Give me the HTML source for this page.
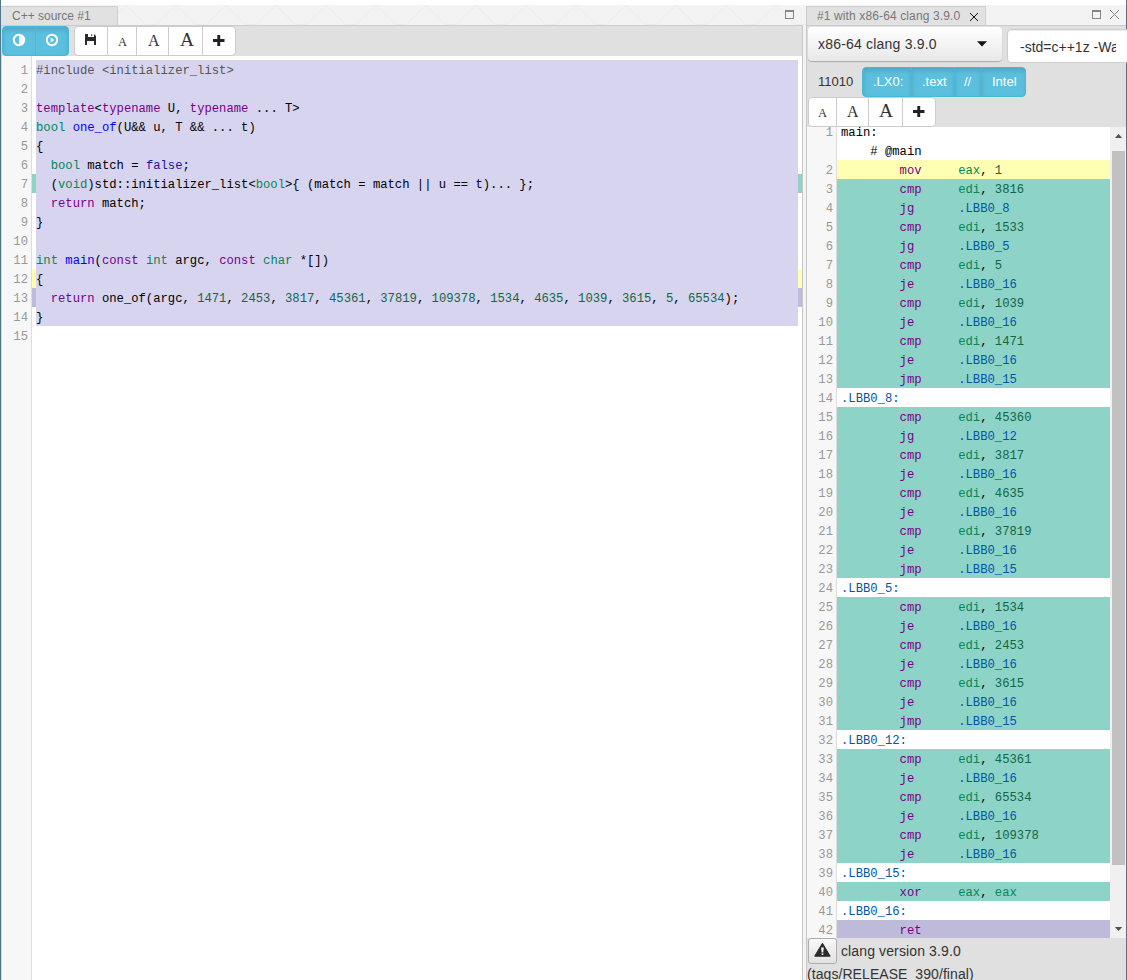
<!DOCTYPE html>
<html><head><meta charset="utf-8">
<style>
*{box-sizing:border-box;margin:0;padding:0}
html,body{width:1127px;height:980px;overflow:hidden;background:#fff;font-family:"Liberation Sans",sans-serif;position:relative}
.a{position:absolute}
.edge{top:0;width:1px;height:980px;background:#507886}
.hdr{top:5px;height:21px;background:#f3f3f3;border-bottom:1px solid #cccccc}
.tab{top:6px;height:19px;background:#e1e1e1;border-top:1px solid #cfcfcf;border-right:1px solid #cfcfcf;color:#777;font-size:12px;line-height:18px;white-space:nowrap}
.tb{background:#e0e0e0}
.btn{background:#fff;border:1px solid #ccc;height:29px}
.mono{font-family:"Liberation Mono",monospace;font-size:12.21px;line-height:19px;white-space:pre;color:#000}
.gut{background:#f7f7f7;border-right:1px solid #ddd}
.serif{font-family:"Liberation Serif",serif;color:#333;line-height:1}
.wt{color:#fff;font-size:13px;line-height:16px;white-space:nowrap}
.bb{top:-1px;height:30px;border:1px solid #46b8da;box-shadow:inset 0 3px 5px rgba(0,0,0,.125)}
.ln{color:#999;text-align:right}
.k{color:#708}.t{color:#085}.d{color:#00f}.at{color:#219}.n{color:#164}.m{color:#555}.v2{color:#05a}
</style></head><body>
<!-- outer edges -->
<div class="a edge" style="left:0"></div>
<div class="a edge" style="left:1126px"></div>

<!-- LEFT PANE -->
<div class="a hdr" style="left:1px;width:805px"></div>
<svg class="a" style="left:1px;top:5px" width="1125" height="20" viewBox="1 0 1125 20"><polyline points="-24.1,0 -4.6,19.5 6.4,19.5 25.9,0 45.4,19.5 56.4,19.5 75.9,0 95.4,19.5 106.4,19.5 125.9,0 145.4,19.5 156.4,19.5 175.9,0 195.4,19.5 206.4,19.5 225.9,0 245.4,19.5 256.4,19.5 275.9,0 295.4,19.5 306.4,19.5 325.9,0 345.4,19.5 356.4,19.5 375.9,0 395.4,19.5 406.4,19.5 425.9,0 445.4,19.5 456.4,19.5 475.9,0 495.4,19.5 506.4,19.5 525.9,0 545.4,19.5 556.4,19.5 575.9,0 595.4,19.5 606.4,19.5 625.9,0 645.4,19.5 656.4,19.5 675.9,0 695.4,19.5 706.4,19.5 725.9,0 745.4,19.5 756.4,19.5 775.9,0 795.4,19.5 806.4,19.5 825.9,0 845.4,19.5 856.4,19.5 875.9,0 895.4,19.5 906.4,19.5 925.9,0 945.4,19.5 956.4,19.5 975.9,0 995.4,19.5 1006.4,19.5 1025.9,0 1045.4,19.5 1056.4,19.5 1075.9,0 1095.4,19.5 1106.4,19.5 1125.9,0 1145.4,19.5 1156.4,19.5 1175.9,0 1195.4,19.5 1206.4,19.5" fill="none" stroke="#ececec" stroke-width="1"/></svg>
<div class="a tab" style="left:1px;width:117px;padding-left:11px">C++ source #1</div>
<div class="a tb" style="left:1px;top:26px;width:801px;height:30px"></div>
<!-- blue group -->
<div class="a" style="left:2px;top:26px;width:67px;height:30px;background:#5bc0de;border:1px solid #46b8da;border-radius:4px;box-shadow:inset 0 3px 5px rgba(0,0,0,.125)"></div>
<div class="a" style="left:35px;top:26px;width:1px;height:30px;background:#4fb6d6"></div>
<svg class="a" style="left:12px;top:33px" width="14" height="14" viewBox="0 0 14 14"><circle cx="7" cy="7" r="5.2" fill="none" stroke="#fff" stroke-width="2"/><path d="M7 1.8 A5.2 5.2 0 0 1 7 12.2 Z" fill="#fff"/></svg>
<svg class="a" style="left:45px;top:33px" width="14" height="14" viewBox="0 0 14 14"><circle cx="7" cy="7" r="5.2" fill="none" stroke="#fff" stroke-width="2"/><path d="M5.7 4.6 L9.4 7 L5.7 9.4 Z" fill="#fff"/></svg>
<!-- white group -->
<div class="a" style="left:74px;top:26px;width:162px;height:30px;background:#fff;border:1px solid #ccc;border-radius:4px"></div>
<div class="a" style="left:107px;top:26px;width:1px;height:30px;background:#ccc"></div>
<div class="a" style="left:136px;top:26px;width:1px;height:30px;background:#ccc"></div>
<div class="a" style="left:168px;top:26px;width:1px;height:30px;background:#ccc"></div>
<div class="a" style="left:202px;top:26px;width:1px;height:30px;background:#ccc"></div>
<svg class="a" style="left:84px;top:33px" width="13" height="13" viewBox="0 0 13 13"><path d="M1 1 H4 V4 H10 V1 L12 3 V12 H10 V8 H3 V12 H1 Z" fill="#2a2a2a"/><rect x="7.2" y="1" width="1" height="2.2" fill="#555"/></svg>
<div class="a serif" style="left:118px;top:36px;font-size:12.5px">A</div>
<div class="a serif" style="left:148px;top:33px;font-size:16px">A</div>
<div class="a serif" style="left:180px;top:30px;font-size:19.5px">A</div>
<svg class="a" style="left:213px;top:35px" width="12" height="11" viewBox="0 0 12 11"><path d="M4.3 0 H7.2 V4.1 H11.5 V6.9 H7.2 V11 H4.3 V6.9 H0 V4.1 H4.3 Z" fill="#222"/></svg>

<!-- left editor -->
<div class="a" style="left:1px;top:25px;width:1px;height:955px;background:#d6d6d6;z-index:3"></div>
<div class="a gut" style="left:1px;top:56px;width:31px;height:924px"></div>
<div class="a" style="left:32px;top:174px;width:770px;height:19px;background:#8dd3c7"></div>
<div class="a" style="left:32px;top:269px;width:770px;height:19px;background:#ffffb3"></div>
<div class="a" style="left:32px;top:288px;width:770px;height:19px;background:#bebada"></div>
<div class="a" style="left:36px;top:60px;width:762px;height:266px;background:#d7d4f0"></div>
<div class="a mono ln" style="left:1px;top:62px;width:27px">1</div>
<div class="a mono" style="left:36px;top:62px"><span class="m">#include &lt;initializer_list&gt;</span></div>
<div class="a mono ln" style="left:1px;top:81px;width:27px">2</div>
<div class="a mono ln" style="left:1px;top:100px;width:27px">3</div>
<div class="a mono" style="left:36px;top:100px"><span class="k">template</span>&lt;<span class="k">typename</span> U, <span class="k">typename</span> ... T&gt;</div>
<div class="a mono ln" style="left:1px;top:119px;width:27px">4</div>
<div class="a mono" style="left:36px;top:119px"><span class="t">bool</span> <span class="d">one_of</span>(U&amp;&amp; u, T &amp;&amp; ... t)</div>
<div class="a mono ln" style="left:1px;top:138px;width:27px">5</div>
<div class="a mono" style="left:36px;top:138px">{</div>
<div class="a mono ln" style="left:1px;top:157px;width:27px">6</div>
<div class="a mono" style="left:36px;top:157px">  <span class="t">bool</span> match = <span class="at">false</span>;</div>
<div class="a mono ln" style="left:1px;top:176px;width:27px">7</div>
<div class="a mono" style="left:36px;top:176px">  (<span class="t">void</span>)std::initializer_list&lt;<span class="t">bool</span>&gt;{ (match = match || u == t)... };</div>
<div class="a mono ln" style="left:1px;top:195px;width:27px">8</div>
<div class="a mono" style="left:36px;top:195px">  <span class="k">return</span> match;</div>
<div class="a mono ln" style="left:1px;top:214px;width:27px">9</div>
<div class="a mono" style="left:36px;top:214px">}</div>
<div class="a mono ln" style="left:1px;top:233px;width:27px">10</div>
<div class="a mono ln" style="left:1px;top:252px;width:27px">11</div>
<div class="a mono" style="left:36px;top:252px"><span class="t">int</span> <span class="d">main</span>(<span class="k">const</span> <span class="t">int</span> argc, <span class="k">const</span> <span class="t">char</span> *[])</div>
<div class="a mono ln" style="left:1px;top:271px;width:27px">12</div>
<div class="a mono" style="left:36px;top:271px">{</div>
<div class="a mono ln" style="left:1px;top:290px;width:27px">13</div>
<div class="a mono" style="left:36px;top:290px">  <span class="k">return</span> one_of(argc, <span class="n">1471</span>, <span class="n">2453</span>, <span class="n">3817</span>, <span class="n">45361</span>, <span class="n">37819</span>, <span class="n">109378</span>, <span class="n">1534</span>, <span class="n">4635</span>, <span class="n">1039</span>, <span class="n">3615</span>, <span class="n">5</span>, <span class="n">65534</span>);</div>
<div class="a mono ln" style="left:1px;top:309px;width:27px">14</div>
<div class="a mono" style="left:36px;top:309px">}</div>
<div class="a mono ln" style="left:1px;top:328px;width:27px">15</div>

<!-- header icons -->
<svg class="a" style="left:785px;top:10px" width="9" height="9" viewBox="0 0 9 9"><rect x="0.5" y="0.5" width="8" height="8" fill="none" stroke="#858585" stroke-width="1"/><rect x="0" y="0" width="9" height="2" fill="#858585"/></svg>
<svg class="a" style="z-index:5;left:1092px;top:10px" width="9" height="9" viewBox="0 0 9 9"><rect x="0.5" y="0.5" width="8" height="8" fill="none" stroke="#858585" stroke-width="1"/><rect x="0" y="0" width="9" height="2" fill="#858585"/></svg>
<svg class="a" style="z-index:5;left:1109px;top:9px" width="11" height="11" viewBox="0 0 11 11"><path d="M1 1 L10 10 M10 1 L1 10" stroke="#858585" stroke-width="1"/></svg>
<svg class="a" style="z-index:5;left:969px;top:12px" width="10" height="10" viewBox="0 0 10 10"><path d="M1 1 L9 9 M9 1 L1 9" stroke="#111" stroke-width="1"/></svg>
<!-- SPLITTER -->
<div class="a" style="left:802px;top:25px;width:5px;height:955px;background:#f3f3f3;border-left:1px solid #c8c8c8"></div>
<div class="a" style="left:806px;top:6px;width:1px;height:974px;background:#c8c8c8"></div>

<!-- RIGHT PANE -->
<div class="a hdr" style="left:807px;width:319px"></div>
<div class="a tab" style="left:807px;width:179px;padding-left:10px;letter-spacing:0.12px">#1 with x86-64 clang 3.9.0</div>
<div class="a tb" style="left:807px;top:26px;width:319px;height:954px"></div>
<!-- compiler select -->
<div class="a" style="left:808px;top:27px;width:194px;height:34px;border-radius:4px;background:linear-gradient(#ffffff,#e8e8e8);box-shadow:0 1px 1px rgba(0,0,0,.25)"></div>
<div class="a" style="left:818px;top:35px;font-size:14px;line-height:18px;color:#333;white-space:nowrap;letter-spacing:0.2px">x86-64 clang 3.9.0</div>
<svg class="a" style="left:976px;top:41px" width="12" height="7" viewBox="0 0 12 7"><path d="M1 0.3 H11 L6 5.6 Z" fill="#111"/></svg>
<!-- options -->
<div class="a" style="left:1007px;top:29px;width:123px;height:34px;border-radius:4px;background:#fff;border:1px solid #cdcdcd;box-shadow:inset 0 1px 1px rgba(0,0,0,.075);overflow:hidden"><div class="a" style="left:12px;top:8px;width:96px;overflow:hidden;font-size:14px;line-height:18px;color:#333;white-space:nowrap">-std=c++1z -Wall -Wextra</div></div>
<!-- row 2 -->
<div class="a" style="left:818px;top:74px;font-size:13px;line-height:16px;color:#333">11010</div>
<div class="a" style="left:862px;top:67px;width:164px;height:30px;background:#5bc0de;border:1px solid #46b8da;border-radius:4px;overflow:hidden">
<div class="a bb" style="left:0;width:49px"></div><div class="a bb" style="left:48px;width:44px"></div><div class="a bb" style="left:91px;width:28px"></div><div class="a bb" style="left:118px;width:46px"></div>
</div>
<div class="a wt" style="left:873px;top:74px">.LX0:</div>
<div class="a wt" style="left:922px;top:74px">.text</div>
<div class="a wt" style="left:964px;top:74px">//</div>
<div class="a wt" style="left:992px;top:74px">Intel</div>
<!-- row 3 -->
<div class="a" style="left:808px;top:97px;width:128px;height:30px;background:#fff;border:1px solid #ccc;border-radius:4px"></div>
<div class="a" style="left:836px;top:97px;width:1px;height:30px;background:#ccc"></div>
<div class="a" style="left:868px;top:97px;width:1px;height:30px;background:#ccc"></div>
<div class="a" style="left:902px;top:97px;width:1px;height:30px;background:#ccc"></div>
<div class="a serif" style="left:818px;top:107px;font-size:12.5px">A</div>
<div class="a serif" style="left:847px;top:104px;font-size:16px">A</div>
<div class="a serif" style="left:879px;top:101px;font-size:19.5px">A</div>
<svg class="a" style="left:913px;top:106px" width="12" height="11" viewBox="0 0 12 11"><path d="M4.3 0 H7.2 V4.1 H11.5 V6.9 H7.2 V11 H4.3 V6.9 H0 V4.1 H4.3 Z" fill="#222"/></svg>
<div class="a" style="left:807px;top:127px;width:303px;height:811px;overflow:hidden;background:#fff">
<div class="a gut" style="left:0;top:0;width:30px;height:811px"></div>
<div class="a mono ln" style="left:0;top:-3px;width:26px">1</div>
<div class="a mono" style="left:34px;top:-3px">main:</div>
<div class="a mono" style="left:34px;top:16px">    # @main</div>
<div class="a" style="left:30px;top:33px;width:273px;height:19px;background:#ffffb3"></div>
<div class="a mono ln" style="left:0;top:35px;width:26px">2</div>
<div class="a mono" style="left:34px;top:35px">        <span class="k">mov</span>     <span class="t">eax</span>, <span class="n">1</span></div>
<div class="a" style="left:30px;top:52px;width:273px;height:19px;background:#8dd3c7"></div>
<div class="a mono ln" style="left:0;top:54px;width:26px">3</div>
<div class="a mono" style="left:34px;top:54px">        <span class="k">cmp</span>     <span class="t">edi</span>, <span class="n">3816</span></div>
<div class="a" style="left:30px;top:71px;width:273px;height:19px;background:#8dd3c7"></div>
<div class="a mono ln" style="left:0;top:73px;width:26px">4</div>
<div class="a mono" style="left:34px;top:73px">        <span class="k">jg</span>      <span class="v2">.LBB0_8</span></div>
<div class="a" style="left:30px;top:90px;width:273px;height:19px;background:#8dd3c7"></div>
<div class="a mono ln" style="left:0;top:92px;width:26px">5</div>
<div class="a mono" style="left:34px;top:92px">        <span class="k">cmp</span>     <span class="t">edi</span>, <span class="n">1533</span></div>
<div class="a" style="left:30px;top:109px;width:273px;height:19px;background:#8dd3c7"></div>
<div class="a mono ln" style="left:0;top:111px;width:26px">6</div>
<div class="a mono" style="left:34px;top:111px">        <span class="k">jg</span>      <span class="v2">.LBB0_5</span></div>
<div class="a" style="left:30px;top:128px;width:273px;height:19px;background:#8dd3c7"></div>
<div class="a mono ln" style="left:0;top:130px;width:26px">7</div>
<div class="a mono" style="left:34px;top:130px">        <span class="k">cmp</span>     <span class="t">edi</span>, <span class="n">5</span></div>
<div class="a" style="left:30px;top:147px;width:273px;height:19px;background:#8dd3c7"></div>
<div class="a mono ln" style="left:0;top:149px;width:26px">8</div>
<div class="a mono" style="left:34px;top:149px">        <span class="k">je</span>      <span class="v2">.LBB0_16</span></div>
<div class="a" style="left:30px;top:166px;width:273px;height:19px;background:#8dd3c7"></div>
<div class="a mono ln" style="left:0;top:168px;width:26px">9</div>
<div class="a mono" style="left:34px;top:168px">        <span class="k">cmp</span>     <span class="t">edi</span>, <span class="n">1039</span></div>
<div class="a" style="left:30px;top:185px;width:273px;height:19px;background:#8dd3c7"></div>
<div class="a mono ln" style="left:0;top:187px;width:26px">10</div>
<div class="a mono" style="left:34px;top:187px">        <span class="k">je</span>      <span class="v2">.LBB0_16</span></div>
<div class="a" style="left:30px;top:204px;width:273px;height:19px;background:#8dd3c7"></div>
<div class="a mono ln" style="left:0;top:206px;width:26px">11</div>
<div class="a mono" style="left:34px;top:206px">        <span class="k">cmp</span>     <span class="t">edi</span>, <span class="n">1471</span></div>
<div class="a" style="left:30px;top:223px;width:273px;height:19px;background:#8dd3c7"></div>
<div class="a mono ln" style="left:0;top:225px;width:26px">12</div>
<div class="a mono" style="left:34px;top:225px">        <span class="k">je</span>      <span class="v2">.LBB0_16</span></div>
<div class="a" style="left:30px;top:242px;width:273px;height:19px;background:#8dd3c7"></div>
<div class="a mono ln" style="left:0;top:244px;width:26px">13</div>
<div class="a mono" style="left:34px;top:244px">        <span class="k">jmp</span>     <span class="v2">.LBB0_15</span></div>
<div class="a mono ln" style="left:0;top:263px;width:26px">14</div>
<div class="a mono" style="left:34px;top:263px"><span class="v2">.LBB0_8:</span></div>
<div class="a" style="left:30px;top:280px;width:273px;height:19px;background:#8dd3c7"></div>
<div class="a mono ln" style="left:0;top:282px;width:26px">15</div>
<div class="a mono" style="left:34px;top:282px">        <span class="k">cmp</span>     <span class="t">edi</span>, <span class="n">45360</span></div>
<div class="a" style="left:30px;top:299px;width:273px;height:19px;background:#8dd3c7"></div>
<div class="a mono ln" style="left:0;top:301px;width:26px">16</div>
<div class="a mono" style="left:34px;top:301px">        <span class="k">jg</span>      <span class="v2">.LBB0_12</span></div>
<div class="a" style="left:30px;top:318px;width:273px;height:19px;background:#8dd3c7"></div>
<div class="a mono ln" style="left:0;top:320px;width:26px">17</div>
<div class="a mono" style="left:34px;top:320px">        <span class="k">cmp</span>     <span class="t">edi</span>, <span class="n">3817</span></div>
<div class="a" style="left:30px;top:337px;width:273px;height:19px;background:#8dd3c7"></div>
<div class="a mono ln" style="left:0;top:339px;width:26px">18</div>
<div class="a mono" style="left:34px;top:339px">        <span class="k">je</span>      <span class="v2">.LBB0_16</span></div>
<div class="a" style="left:30px;top:356px;width:273px;height:19px;background:#8dd3c7"></div>
<div class="a mono ln" style="left:0;top:358px;width:26px">19</div>
<div class="a mono" style="left:34px;top:358px">        <span class="k">cmp</span>     <span class="t">edi</span>, <span class="n">4635</span></div>
<div class="a" style="left:30px;top:375px;width:273px;height:19px;background:#8dd3c7"></div>
<div class="a mono ln" style="left:0;top:377px;width:26px">20</div>
<div class="a mono" style="left:34px;top:377px">        <span class="k">je</span>      <span class="v2">.LBB0_16</span></div>
<div class="a" style="left:30px;top:394px;width:273px;height:19px;background:#8dd3c7"></div>
<div class="a mono ln" style="left:0;top:396px;width:26px">21</div>
<div class="a mono" style="left:34px;top:396px">        <span class="k">cmp</span>     <span class="t">edi</span>, <span class="n">37819</span></div>
<div class="a" style="left:30px;top:413px;width:273px;height:19px;background:#8dd3c7"></div>
<div class="a mono ln" style="left:0;top:415px;width:26px">22</div>
<div class="a mono" style="left:34px;top:415px">        <span class="k">je</span>      <span class="v2">.LBB0_16</span></div>
<div class="a" style="left:30px;top:432px;width:273px;height:19px;background:#8dd3c7"></div>
<div class="a mono ln" style="left:0;top:434px;width:26px">23</div>
<div class="a mono" style="left:34px;top:434px">        <span class="k">jmp</span>     <span class="v2">.LBB0_15</span></div>
<div class="a mono ln" style="left:0;top:453px;width:26px">24</div>
<div class="a mono" style="left:34px;top:453px"><span class="v2">.LBB0_5:</span></div>
<div class="a" style="left:30px;top:470px;width:273px;height:19px;background:#8dd3c7"></div>
<div class="a mono ln" style="left:0;top:472px;width:26px">25</div>
<div class="a mono" style="left:34px;top:472px">        <span class="k">cmp</span>     <span class="t">edi</span>, <span class="n">1534</span></div>
<div class="a" style="left:30px;top:489px;width:273px;height:19px;background:#8dd3c7"></div>
<div class="a mono ln" style="left:0;top:491px;width:26px">26</div>
<div class="a mono" style="left:34px;top:491px">        <span class="k">je</span>      <span class="v2">.LBB0_16</span></div>
<div class="a" style="left:30px;top:508px;width:273px;height:19px;background:#8dd3c7"></div>
<div class="a mono ln" style="left:0;top:510px;width:26px">27</div>
<div class="a mono" style="left:34px;top:510px">        <span class="k">cmp</span>     <span class="t">edi</span>, <span class="n">2453</span></div>
<div class="a" style="left:30px;top:527px;width:273px;height:19px;background:#8dd3c7"></div>
<div class="a mono ln" style="left:0;top:529px;width:26px">28</div>
<div class="a mono" style="left:34px;top:529px">        <span class="k">je</span>      <span class="v2">.LBB0_16</span></div>
<div class="a" style="left:30px;top:546px;width:273px;height:19px;background:#8dd3c7"></div>
<div class="a mono ln" style="left:0;top:548px;width:26px">29</div>
<div class="a mono" style="left:34px;top:548px">        <span class="k">cmp</span>     <span class="t">edi</span>, <span class="n">3615</span></div>
<div class="a" style="left:30px;top:565px;width:273px;height:19px;background:#8dd3c7"></div>
<div class="a mono ln" style="left:0;top:567px;width:26px">30</div>
<div class="a mono" style="left:34px;top:567px">        <span class="k">je</span>      <span class="v2">.LBB0_16</span></div>
<div class="a" style="left:30px;top:584px;width:273px;height:19px;background:#8dd3c7"></div>
<div class="a mono ln" style="left:0;top:586px;width:26px">31</div>
<div class="a mono" style="left:34px;top:586px">        <span class="k">jmp</span>     <span class="v2">.LBB0_15</span></div>
<div class="a mono ln" style="left:0;top:605px;width:26px">32</div>
<div class="a mono" style="left:34px;top:605px"><span class="v2">.LBB0_12:</span></div>
<div class="a" style="left:30px;top:622px;width:273px;height:19px;background:#8dd3c7"></div>
<div class="a mono ln" style="left:0;top:624px;width:26px">33</div>
<div class="a mono" style="left:34px;top:624px">        <span class="k">cmp</span>     <span class="t">edi</span>, <span class="n">45361</span></div>
<div class="a" style="left:30px;top:641px;width:273px;height:19px;background:#8dd3c7"></div>
<div class="a mono ln" style="left:0;top:643px;width:26px">34</div>
<div class="a mono" style="left:34px;top:643px">        <span class="k">je</span>      <span class="v2">.LBB0_16</span></div>
<div class="a" style="left:30px;top:660px;width:273px;height:19px;background:#8dd3c7"></div>
<div class="a mono ln" style="left:0;top:662px;width:26px">35</div>
<div class="a mono" style="left:34px;top:662px">        <span class="k">cmp</span>     <span class="t">edi</span>, <span class="n">65534</span></div>
<div class="a" style="left:30px;top:679px;width:273px;height:19px;background:#8dd3c7"></div>
<div class="a mono ln" style="left:0;top:681px;width:26px">36</div>
<div class="a mono" style="left:34px;top:681px">        <span class="k">je</span>      <span class="v2">.LBB0_16</span></div>
<div class="a" style="left:30px;top:698px;width:273px;height:19px;background:#8dd3c7"></div>
<div class="a mono ln" style="left:0;top:700px;width:26px">37</div>
<div class="a mono" style="left:34px;top:700px">        <span class="k">cmp</span>     <span class="t">edi</span>, <span class="n">109378</span></div>
<div class="a" style="left:30px;top:717px;width:273px;height:19px;background:#8dd3c7"></div>
<div class="a mono ln" style="left:0;top:719px;width:26px">38</div>
<div class="a mono" style="left:34px;top:719px">        <span class="k">je</span>      <span class="v2">.LBB0_16</span></div>
<div class="a mono ln" style="left:0;top:738px;width:26px">39</div>
<div class="a mono" style="left:34px;top:738px"><span class="v2">.LBB0_15:</span></div>
<div class="a" style="left:30px;top:755px;width:273px;height:19px;background:#8dd3c7"></div>
<div class="a mono ln" style="left:0;top:757px;width:26px">40</div>
<div class="a mono" style="left:34px;top:757px">        <span class="k">xor</span>     <span class="t">eax</span>, <span class="t">eax</span></div>
<div class="a mono ln" style="left:0;top:776px;width:26px">41</div>
<div class="a mono" style="left:34px;top:776px"><span class="v2">.LBB0_16:</span></div>
<div class="a" style="left:30px;top:793px;width:273px;height:19px;background:#bebada"></div>
<div class="a mono ln" style="left:0;top:795px;width:26px">42</div>
<div class="a mono" style="left:34px;top:795px">        <span class="k">ret</span>     </div>
</div>
<div class="a" style="left:1110px;top:127px;width:16px;height:811px;background:#f0f0f0"></div>
<svg class="a" style="left:1110px;top:127px" width="16" height="17" viewBox="0 0 16 17"><path d="M4.9 11 L8.55 6.9 L12.2 11 Z" fill="#505050"/></svg>
<svg class="a" style="left:1110px;top:921px" width="16" height="17" viewBox="0 0 16 17"><path d="M4.9 5.9 L12.2 5.9 L8.55 10 Z" fill="#505050"/></svg>
<div class="a" style="left:1112px;top:151px;width:13px;height:714px;background:#c1c1c1"></div>
<!-- status -->
<div class="a" style="left:808px;top:938px;width:29px;height:26px;border:1px solid #adadad;border-radius:3px;background:linear-gradient(#f8f8f8,#e2e2e2)"></div>
<svg class="a" style="left:813px;top:942px" width="19" height="17" viewBox="0 0 19 17"><path d="M9.45 1.2 L17.2 14.2 H1.7 Z" fill="#2a2a2a" stroke="#2a2a2a" stroke-width="1" stroke-linejoin="round"/><path d="M8.1 5.6 H10.8 L10.2 10.4 H8.7 Z" fill="#fff"/><rect x="8.6" y="11.3" width="1.7" height="1.7" fill="#fff"/></svg>
<div class="a" style="left:841px;top:942px;font-size:14px;line-height:18px;color:#333;white-space:nowrap;letter-spacing:0.12px">clang version 3.9.0</div>
<div class="a" style="left:807px;top:965px;font-size:14px;line-height:18px;color:#333;white-space:nowrap;letter-spacing:0.07px">(tags/RELEASE_390/final)</div>
</body></html>
